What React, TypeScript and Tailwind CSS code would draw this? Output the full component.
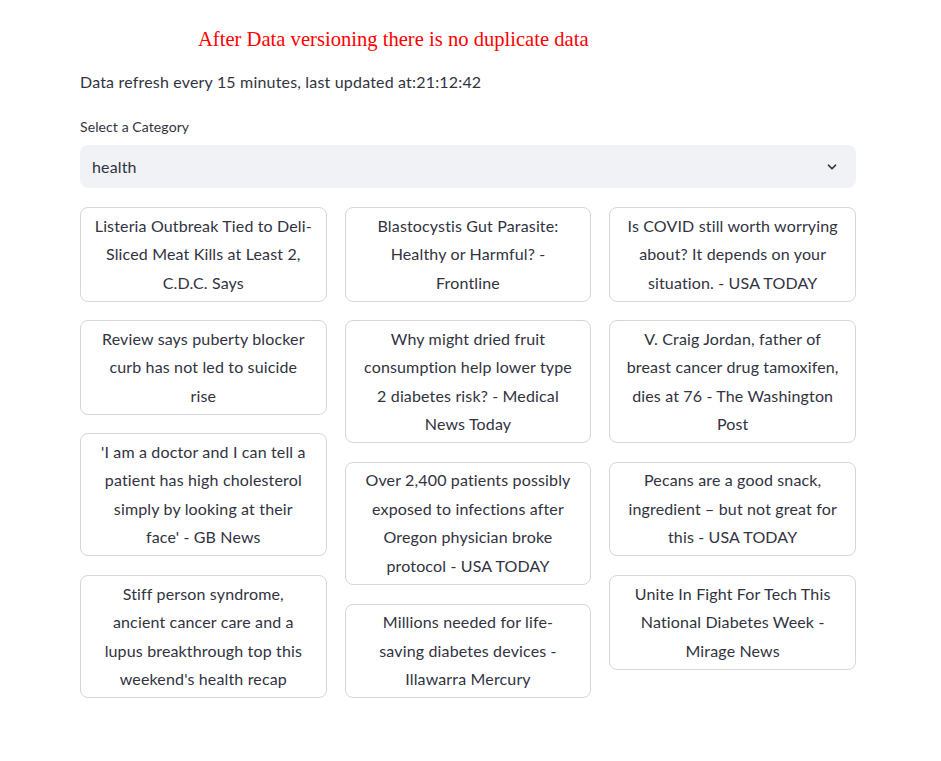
import React from "react";

const cols: string[][][] = [
  [
    ["Listeria Outbreak Tied to Deli-", "Sliced Meat Kills at Least 2,", "C.D.C. Says"],
    ["Review says puberty blocker", "curb has not led to suicide", "rise"],
    ["'I am a doctor and I can tell a", "patient has high cholesterol", "simply by looking at their", "face' - GB News"],
    ["Stiff person syndrome,", "ancient cancer care and a", "lupus breakthrough top this", "weekend's health recap"],
  ],
  [
    ["Blastocystis Gut Parasite:", "Healthy or Harmful? -", "Frontline"],
    ["Why might dried fruit", "consumption help lower type", "2 diabetes risk? - Medical", "News Today"],
    ["Over 2,400 patients possibly", "exposed to infections after", "Oregon physician broke", "protocol - USA TODAY"],
    ["Millions needed for life-", "saving diabetes devices -", "Illawarra Mercury"],
  ],
  [
    ["Is COVID still worth worrying", "about? It depends on your", "situation. - USA TODAY"],
    ["V. Craig Jordan, father of", "breast cancer drug tamoxifen,", "dies at 76 - The Washington", "Post"],
    ["Pecans are a good snack,", "ingredient \u2013 but not great for", "this - USA TODAY"],
    ["Unite In Fight For Tech This", "National Diabetes Week -", "Mirage News"],
  ],
];

export default function App() {
  return (
    <div
      className="min-h-[761px] w-full bg-white text-[#31333f]"
      style={{ fontFamily: "Lato, 'Noto Sans', sans-serif" }}
    >
      <div className="w-[776px] ml-[80px] pt-[26px]">
        <div className="pl-[118px] h-[26px] flex items-center">
          <span
            className="text-[20.6px] text-[#ff0000] leading-none"
            style={{ fontFamily: "'Liberation Serif', serif" }}
          >
            After Data versioning there is no duplicate data
          </span>
        </div>
        <div className="mt-[17px] text-[16px] leading-[26px] tracking-[0.18px]">
          Data refresh every 15 minutes, last updated at:21:12:42
        </div>
        <div className="mt-[22px] text-[14px] leading-[20px] tracking-[0.1px]">Select a Category</div>
        <div className="mt-[8px] h-[43px] rounded-[8px] bg-[#f0f2f6] flex items-center justify-between pl-[12px] pr-[17px]">
          <span className="text-[16px] tracking-[0.15px]">health</span>
          <svg width="14" height="14" viewBox="0 0 24 24" fill="none" stroke="#31333f" strokeWidth="3" strokeLinecap="round" strokeLinejoin="round">
            <path d="M6 9l6 6 6-6" />
          </svg>
        </div>
        <div className="mt-[19px] grid grid-cols-3 gap-x-[18px]">
          {cols.map((col, ci) => (
            <div key={ci} className="flex flex-col gap-[18.7px]">
              {col.map((lines, i) => (
                <div
                  key={i}
                  className="rounded-[8px] border border-[#d6d6d9] py-[3.5px] px-[8px] text-center text-[16px] leading-[28.5px] tracking-[0.15px] whitespace-nowrap"
                >
                  {lines.map((l, j) => (
                    <div key={j}>{l}</div>
                  ))}
                </div>
              ))}
            </div>
          ))}
        </div>
      </div>
    </div>
  );
}
